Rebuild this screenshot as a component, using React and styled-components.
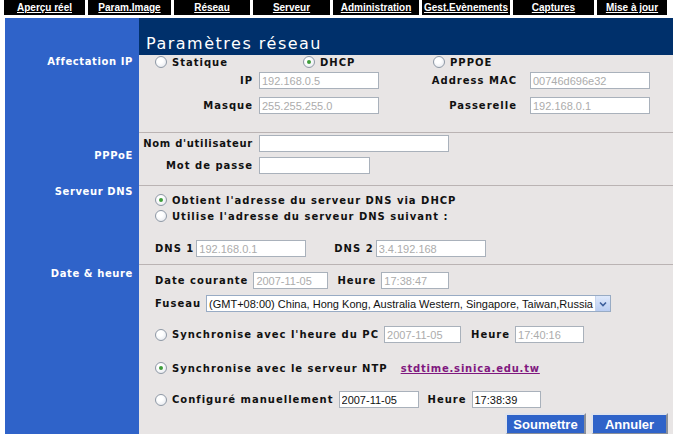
import React from "react";
import styled, { createGlobalStyle } from "styled-components";

const Global = createGlobalStyle`
  body {
    margin: 0;
    background: #fff;
    font-family: "DejaVu Sans", Verdana, sans-serif;
  }
`;

const tabs = [
  ["Aperçu réel", 81],
  ["Param.Image", 83],
  ["Réseau", 76],
  ["Serveur", 77],
  ["Administration", 86],
  ["Gest.Evènements", 88],
  ["Captures", 81],
  ["Mise à jour", 70],
];

export default function App() {
  return (
    <Page>
      <Global />
      <Nav $cols={tabs.map((t) => t[1] + "px").join(" ")}>
        {tabs.map(([t]) => (
          <Tab key={t}>
            <TabLink href="#">{t}</TabLink>
          </Tab>
        ))}
      </Nav>

      <Main>
        <Side />
        <TitleBar>Paramètres réseau</TitleBar>

        {/* affectation ip */}
        <Side $top={1}>Affectation IP</Side>
        <Section $first $pad="0 0 18px 0">
          <RadioGrid>
            <Option>
              <Radio />
              <Label>Statique</Label>
            </Option>
            <Option>
              <Radio $checked />
              <Label>DHCP</Label>
            </Option>
            <Option>
              <Radio />
              <Label>PPPOE</Label>
            </Option>
          </RadioGrid>
          <FieldGrid $cols="120px 120px 151px 120px" $gap={8} $mt={3}>
            <FieldLabel $pr={6}>IP</FieldLabel>
            <Field $w={120} $muted readOnly value="192.168.0.5" />
            <FieldLabel $pr={13}>Address MAC</FieldLabel>
            <Field $w={120} $muted readOnly value="00746d696e32" />
            <FieldLabel $pr={6}>Masque</FieldLabel>
            <Field $w={120} $muted readOnly value="255.255.255.0" />
            <FieldLabel $pr={13}>Passerelle</FieldLabel>
            <Field $w={120} $muted readOnly value="192.168.0.1" />
          </FieldGrid>
        </Section>

        {/* pppoe */}
        <Side $top={18}>PPPoE</Side>
        <Section $pad="2px 0 11px 0">
          <FieldGrid $cols="120px auto" $gap={5}>
            <FieldLabel $pr={6} $ls={0.7}>Nom d'utilisateur</FieldLabel>
            <Field $w={190} readOnly value="" />
            <FieldLabel $pr={6}>Mot de passe</FieldLabel>
            <Field $w={111} type="password" readOnly value="" />
          </FieldGrid>
        </Section>

        {/* dns */}
        <Side $top={1}>Serveur DNS</Side>
        <Section $pad="7px 0 7px 16px">
          <Row>
            <Radio $checked />
            <Label>Obtient l'adresse du serveur DNS via DHCP</Label>
          </Row>
          <Row $mt={2}>
            <Radio />
            <Label>Utilise l'adresse du serveur DNS suivant :</Label>
          </Row>
          <Row $mt={17} $h={17} $gap={2}>
            <Label>DNS 1</Label>
            <Field $w={110} $muted readOnly value="192.168.0.1" />
            <Label $ml={26}>DNS 2</Label>
            <Field $w={110} $muted readOnly value="3.4.192.168" />
          </Row>
        </Section>

        {/* date */}
        <Side $top={4}>Date &amp; heure</Side>
        <Section $pad="7px 5px 0 16px">
          <Row $h={17}>
            <Label>Date courante</Label>
            <Field $w={75} $muted readOnly value="2007-11-05" />
            <Label $ml={4}>Heure</Label>
            <Field $w={68} $muted readOnly value="17:38:47" />
          </Row>
          <Row $mt={6} $h={17}>
            <Label>Fuseau</Label>
            <Select>
              <span>
                (GMT+08:00) China, Hong Kong, Australia Western, Singapore,
                Taiwan,Russia
              </span>
              <SelectArrow>
                <svg width="8" height="6" viewBox="0 0 8 6">
                  <path d="M1 1.5 L4 4.5 L7 1.5" fill="none" stroke="#3d5f9c" strokeWidth="1.6" />
                </svg>
              </SelectArrow>
            </Select>
          </Row>
          <Row $mt={14} $h={17}>
            <Radio />
            <Label>Synchronise avec l'heure du PC</Label>
            <Field $w={77} $muted readOnly value="2007-11-05" />
            <Label $ml={5}>Heure</Label>
            <Field $w={69} $muted readOnly value="17:40:16" />
          </Row>
          <Row $mt={18}>
            <Radio $checked />
            <Label>Synchronise avec le serveur NTP</Label>
            <NtpLink href="#">stdtime.sinica.edu.tw</NtpLink>
          </Row>
          <Row $mt={16} $h={17}>
            <Radio />
            <Label>Configuré manuellement</Label>
            <Field $w={80} readOnly value="2007-11-05" />
            <Label $ml={4}>Heure</Label>
            <Field $w={69} readOnly value="17:38:39" />
          </Row>
          <Buttons>
            <Button $w={81}>Soumettre</Button>
            <Button $w={77}>Annuler</Button>
          </Buttons>
        </Section>
      </Main>
    </Page>
  );
}

const Page = styled.div`
  width: 673px;
`;

const Nav = styled.nav`
  display: grid;
  grid-template-columns: ${(p) => p.$cols};
  column-gap: 3px;
  margin-left: 4px;
  width: fit-content;
  height: 15px;
`;

const Tab = styled.div`
  background: #000;
  display: flex;
  align-items: center;
  justify-content: center;
`;

const TabLink = styled.a`
  color: #fff;
  font: bold 10px "Liberation Sans", Arial, sans-serif;
  text-decoration: underline;
`;

const Main = styled.div`
  display: grid;
  grid-template-columns: 134px 1fr;
  margin: 3px 0 0 5px;
`;

const Side = styled.div`
  background: #2f63c9;
  color: #fff;
  font: bold 10px "DejaVu Sans", Verdana, sans-serif;
  letter-spacing: 0.6px;
  line-height: 12px;
  text-align: right;
  padding: ${(p) => p.$top || 0}px 6px 0 0;
`;

const TitleBar = styled.div`
  background: #00306b;
  color: #fff;
  height: 37px;
  box-sizing: border-box;
  padding: 17px 0 0 7px;
  font: 16px "DejaVu Sans", Verdana, sans-serif;
  line-height: 17px;
  letter-spacing: 1.5px;
`;

const Section = styled.div`
  background: #e8e5e5;
  border-top: ${(p) => (p.$first ? "none" : "1px solid #bab3b3")};
  padding: ${(p) => p.$pad};
`;

const Label = styled.span`
  font: bold 10px "DejaVu Sans", Verdana, sans-serif;
  letter-spacing: ${(p) => p.$ls ?? 1}px;
  color: #111;
  white-space: nowrap;
  margin-left: ${(p) => p.$ml || 0}px;
`;

const RadioGrid = styled.div`
  display: grid;
  grid-template-columns: 148px 130px auto;
  height: 14px;
  padding-left: 16px;
  align-items: center;
`;

const Option = styled.div`
  display: flex;
  align-items: center;
  gap: 5px;
`;

const Radio = styled.span`
  flex: none;
  width: 10px;
  height: 10px;
  border-radius: 50%;
  border: 1px solid #8f99a6;
  background: radial-gradient(circle at 40% 35%, #ffffff 30%, #dfe3ea 100%);
  display: inline-flex;
  align-items: center;
  justify-content: center;
  &::after {
    content: "";
    width: 4px;
    height: 4px;
    border-radius: 50%;
    background: ${(p) => (p.$checked ? "#3e9c3a" : "transparent")};
  }
`;

const FieldGrid = styled.div`
  display: grid;
  grid-template-columns: ${(p) => p.$cols};
  grid-auto-rows: 17px;
  row-gap: ${(p) => p.$gap}px;
  align-items: center;
  margin-top: ${(p) => p.$mt || 0}px;
`;

const FieldLabel = styled(Label)`
  text-align: right;
  padding-right: ${(p) => p.$pr}px;
`;

const Field = styled.input`
  box-sizing: border-box;
  width: ${(p) => p.$w}px;
  height: 17px;
  margin: 0;
  padding: 0 2px;
  border: 1px solid #a9b1bb;
  background: #fff;
  font: 11px "Liberation Sans", Arial, sans-serif;
  color: ${(p) => (p.$muted ? "#acacac" : "#111")};
  outline: none;
`;

const Row = styled.div`
  display: flex;
  align-items: center;
  gap: ${(p) => p.$gap ?? 5}px;
  height: ${(p) => p.$h || 14}px;
  margin-top: ${(p) => p.$mt || 0}px;
`;

const Select = styled.div`
  box-sizing: border-box;
  width: 405px;
  height: 17px;
  border: 1px solid #98abc4;
  background: #fff;
  display: flex;
  align-items: center;
  justify-content: space-between;
  padding-left: 2px;
  font: 11px "Liberation Sans", Arial, sans-serif;
  color: #111;
  white-space: nowrap;
`;

const SelectArrow = styled.span`
  width: 14px;
  height: 15px;
  background: linear-gradient(#dfe9fb, #b9cdf2);
  border-left: 1px solid #c6d4ec;
  display: flex;
  align-items: center;
  justify-content: center;
`;

const NtpLink = styled.a`
  margin-left: 8px;
  font: bold 10px "DejaVu Sans", Verdana, sans-serif;
  letter-spacing: 0.8px;
  color: #80197f;
  text-decoration: underline;
`;

const Buttons = styled.div`
  display: flex;
  justify-content: flex-end;
  gap: 5px;
  margin-top: 5px;
`;

const Button = styled.button`
  width: ${(p) => p.$w}px;
  height: 22px;
  background: #2f63c9;
  color: #fff;
  font: bold 13px "Liberation Sans", Arial, sans-serif;
  border: 2px solid;
  border-color: #dfe3ec #8a8f99 #8a8f99 #dfe3ec;
  padding: 0;
`;
